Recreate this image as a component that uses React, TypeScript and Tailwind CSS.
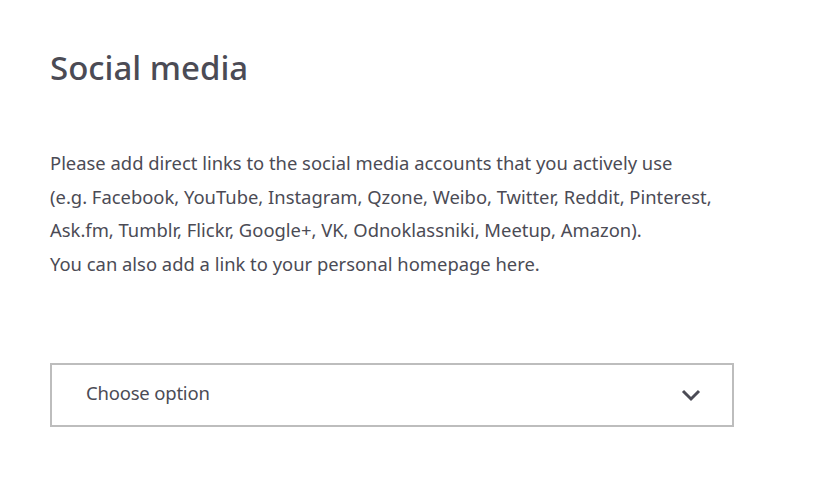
export default function App() {
  return (
    <div className="min-h-[487px] w-[817px] bg-white pl-[50px] pt-[44px]" style={{ fontFamily: '"Noto Sans", sans-serif' }}>
      <h1 className="text-[33px] leading-[48px] text-[#4b4b55] font-medium">Social media</h1>
      <p className="mt-[54px] text-[18.4px] leading-[33.5px] text-[#4b4b55]">
        Please add direct links to the social media accounts that you actively use
        <br />
        (e.g. Facebook, YouTube, Instagram, Qzone, Weibo, Twitter, Reddit, Pinterest,
        <br />
        Ask.fm, Tumblr, Flickr, Google+, VK, Odnoklassniki, Meetup, Amazon).
        <br />
        You can also add a link to your personal homepage here.
      </p>
      <div className="mt-[83px] flex h-[64px] w-[684px] items-center justify-between border-2 border-[#bdbdbd] pl-[34px] pr-[30px]">
        <span className="text-[18.5px] text-[#4b4b55] tracking-[-0.2px] -mt-[4px]">Choose option</span>
        <svg width="22" height="14" viewBox="0 0 22 14" fill="none">
          <path d="M3 3 L11 11 L19 3" stroke="#4b4b55" strokeWidth="3" />
        </svg>
      </div>
    </div>
  );
}
